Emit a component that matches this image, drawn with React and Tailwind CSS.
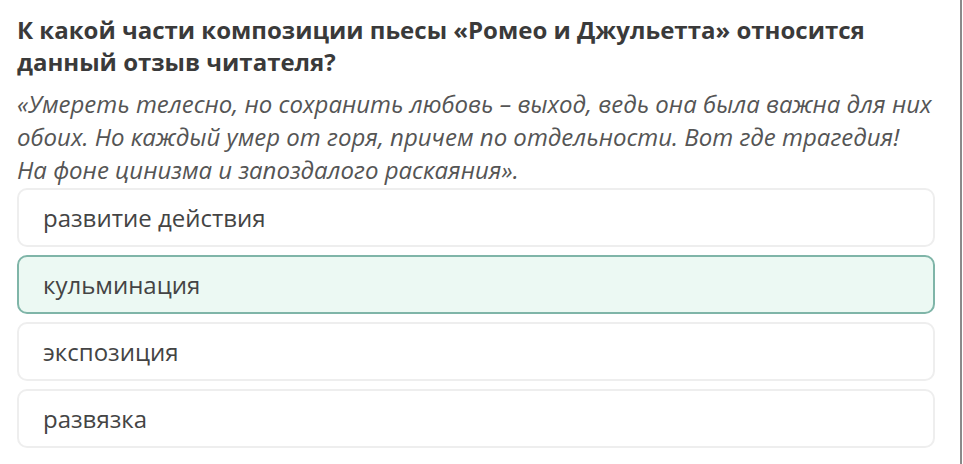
export default function App() {
  const options = [
    { text: "развитие действия", active: false },
    { text: "кульминация", active: true },
    { text: "экспозиция", active: false },
    { text: "развязка", active: false },
  ];

  return (
    <div className="w-[963px] h-[464px] bg-white flex" style={{ fontFamily: '"Open Sans", sans-serif' }}>
      <div className="flex-1 pl-[17px] pr-[22px] pt-[14px]">
        <h1 className="text-[24px] leading-[32px] font-bold text-[#3a3a3a]">
          К какой части композиции пьесы «Ромео и Джульетта» относится данный отзыв читателя?
        </h1>
        <p className="mt-[9px] text-[24px] leading-[33px] italic text-[#555555]">
          «Умереть телесно, но сохранить любовь – выход, ведь она была важна для них обоих. Но каждый умер от горя, причем по отдельности. Вот где трагедия! На фоне цинизма и запоздалого раскаяния».
        </p>
        <div className="mt-[2px] flex flex-col gap-[8px]">
          {options.map((o) => (
            <div
              key={o.text}
              className={
                o.active
                  ? "h-[59px] rounded-[10px] border-2 border-[#7fb5a8] bg-[#ecf9f3] flex items-center pl-[24px] text-[24px] text-[#444444]"
                  : "h-[59px] rounded-[10px] border-2 border-[#eeeeee] bg-white flex items-center pl-[24px] text-[24px] text-[#444444]"
              }
            >
              {o.text}
            </div>
          ))}
        </div>
      </div>
      <div className="w-[3px] bg-white" />
      <div className="w-[2px] bg-[#8a8a8a]" />
      <div className="w-[1px] bg-white" />
    </div>
  );
}
